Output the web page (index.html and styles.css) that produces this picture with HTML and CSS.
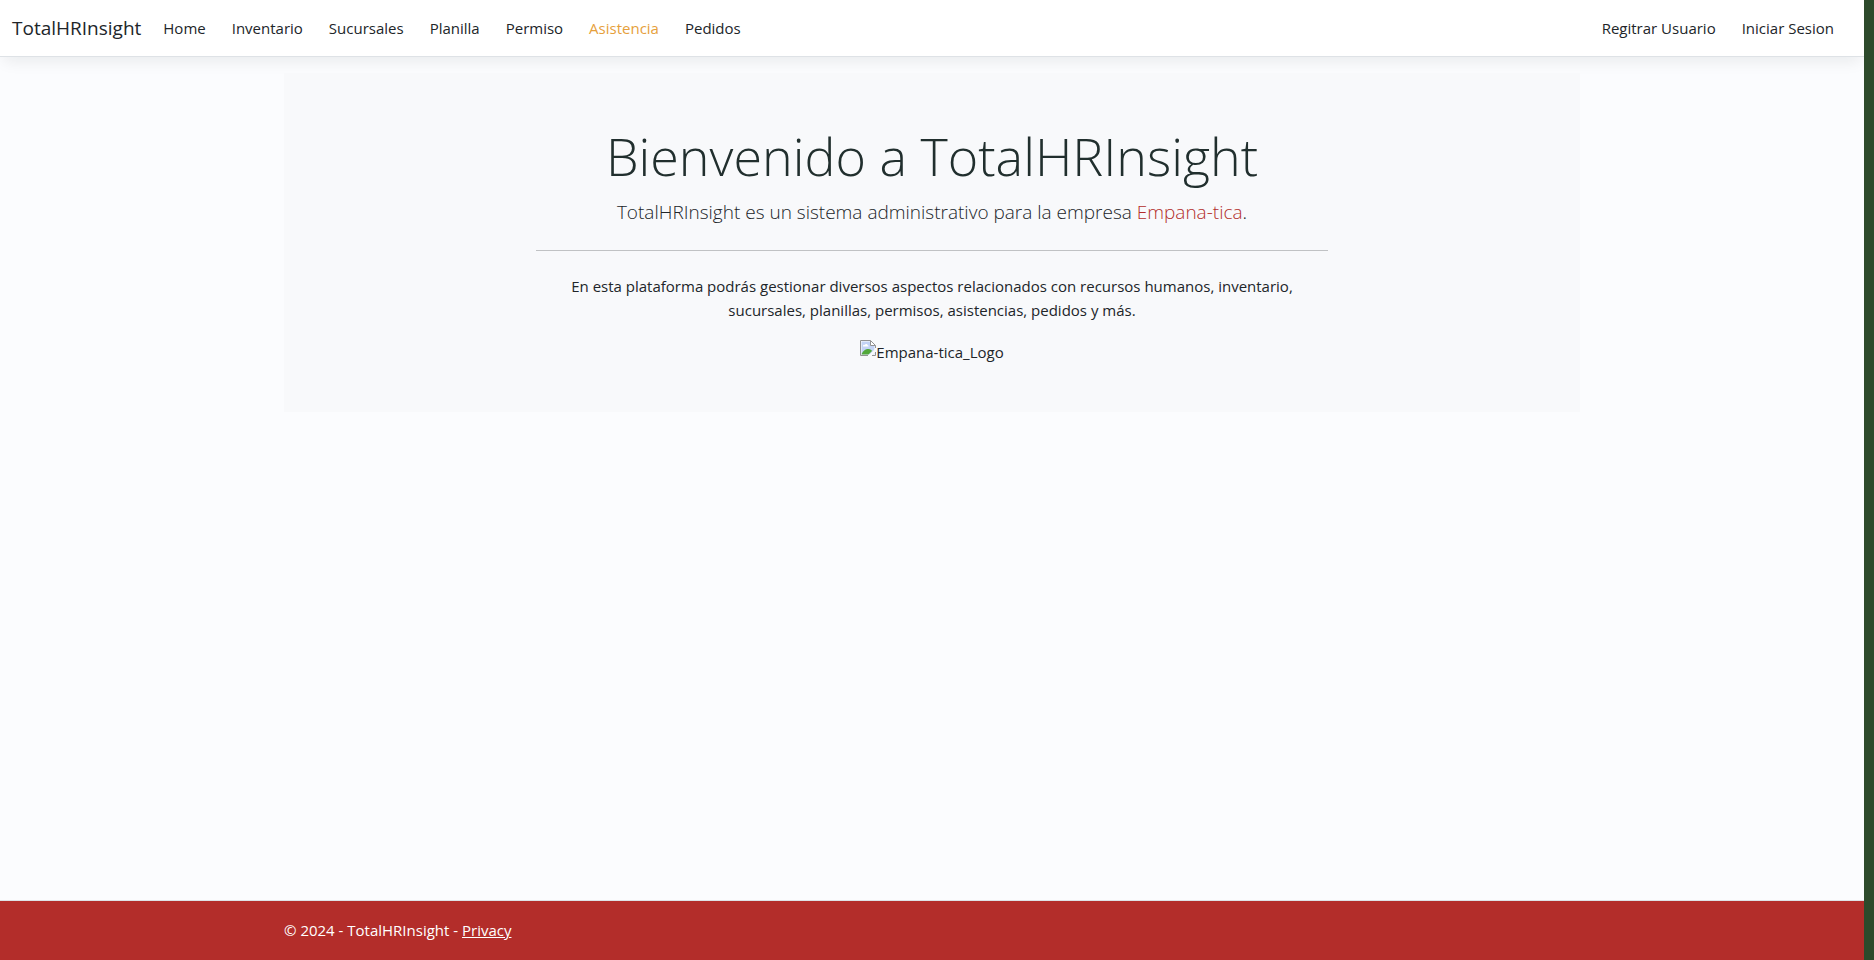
FILE: index.html
```html
<!DOCTYPE html>
<html lang="es">
<head>
<meta charset="utf-8">
<meta name="viewport" content="width=device-width, initial-scale=1">
<title>TotalHRInsight</title>
<link rel="stylesheet" href="styles.css">
</head>
<body>
<div class="page">
  <header class="navbar">
    <a class="brand" href="#">TotalHRInsight</a>
    <nav class="menu">
      <a href="#">Home</a>
      <a href="#">Inventario</a>
      <a href="#">Sucursales</a>
      <a href="#">Planilla</a>
      <a href="#">Permiso</a>
      <a class="active" href="#">Asistencia</a>
      <a href="#">Pedidos</a>
    </nav>
    <nav class="menu account">
      <a href="#">Regitrar Usuario</a>
      <a href="#">Iniciar Sesion</a>
    </nav>
  </header>
  <main class="container">
    <section class="hero">
      <div class="hero-body">
        <h1>Bienvenido a TotalHRInsight</h1>
        <p class="lead">TotalHRInsight es un sistema administrativo para la empresa <span class="company">Empana-tica</span>.</p>
        <hr>
        <p class="intro">En esta plataforma podrás gestionar diversos aspectos relacionados con recursos humanos, inventario, sucursales, planillas, permisos, asistencias, pedidos y más.</p>
        <div class="logo">
          <svg width="16" height="16" viewBox="0 0 16 16" aria-hidden="true">
            <path d="M.5.5h10l5 5v10H.5z" fill="#fff"/>
            <path d="M1.500 1.500h9v4.500h4v8.500h-13z" fill="#c3d3f5"/>
            <path d="M3 6c0-1 1-1.500 1.700-1C5.200 3.500 7.500 3.700 7.600 5.200 8.600 5.200 8.800 6 8.600 6.500H3z" fill="#fff"/>
            <path d="M1.500 14.500c1-3.500 4-5.500 7-5.500 2 0 3 1 3.500 2l-3.500 3.500z" fill="#52a83a"/>
            <path d="M8 16 16 8v3.500L11.500 16z" fill="#f8f9fb"/>
            <path d="M8 15.500H.5V.5h10l5 5V8M15.500 12v3.500H12M10.500.5v5h5" fill="none" stroke="#929292"/>
          </svg>
          <span>Empana-tica_Logo</span>
        </div>
      </div>
    </section>
  </main>
  <footer class="footer">
    <div class="container">© 2024 - TotalHRInsight - <a href="#">Privacy</a></div>
  </footer>
</div>
</body>
</html>
```
FILE: styles.css
```css
* { box-sizing: border-box; }
body {
  margin: 0;
  min-height: 100vh;
  display: flex;
  background: #fbfcfe;
  border-right: 10px solid #2d4a2b;
  color: #212529;
  font: 15px/24px "Open Sans", sans-serif;
}
.page {
  flex: 1;
  min-height: 100vh;
  display: flex;
  flex-direction: column;
  border-right: 1px solid #55705a;
  margin-right: -1px;
}
.navbar {
  display: flex;
  align-items: center;
  min-height: 57px;
  padding: 8px 12px;
  margin-bottom: 16px;
  background: #fff;
  border-bottom: 1px solid #dee2e6;
  box-shadow: 0 8px 16px -4px rgba(0, 20, 30, 0.08);
}
.navbar a { color: #212529; text-decoration: none; }
.navbar .brand { font-size: 19px; margin-right: 22px; }
.menu { display: flex; gap: 26px; }
.account { margin-left: auto; padding-right: 18px; }
.navbar .active { color: #e69f3c; }
.container {
  width: 100%;
  max-width: 1320px;
  margin: 0 auto;
  padding: 0 12px;
}
.hero { padding: 48px 32px; background: #f8f9fb; text-align: center; }
.hero-body { max-width: 792px; margin: 0 auto; }
h1 { margin: 0 0 6px; font-size: 52px; line-height: 70px; font-weight: 300; color: #212f2e; }
.lead { margin: 0; font-size: 19px; line-height: 30px; font-weight: 300; }
.company { color: #b32d2a; }
hr { margin: 23px 0; border: 0; border-top: 1px solid #c0c2c4; }
.intro { margin: 0 0 16px; padding: 0 24px; }
.logo { display: flex; justify-content: center; padding: 2px 0 0; }
.footer {
  margin-top: auto;
  padding: 17px 0 18px;
  background: #b32d2a;
  border-top: 1px solid #dee2e6;
  color: #fff;
}
.footer a { color: #fff; }
```
